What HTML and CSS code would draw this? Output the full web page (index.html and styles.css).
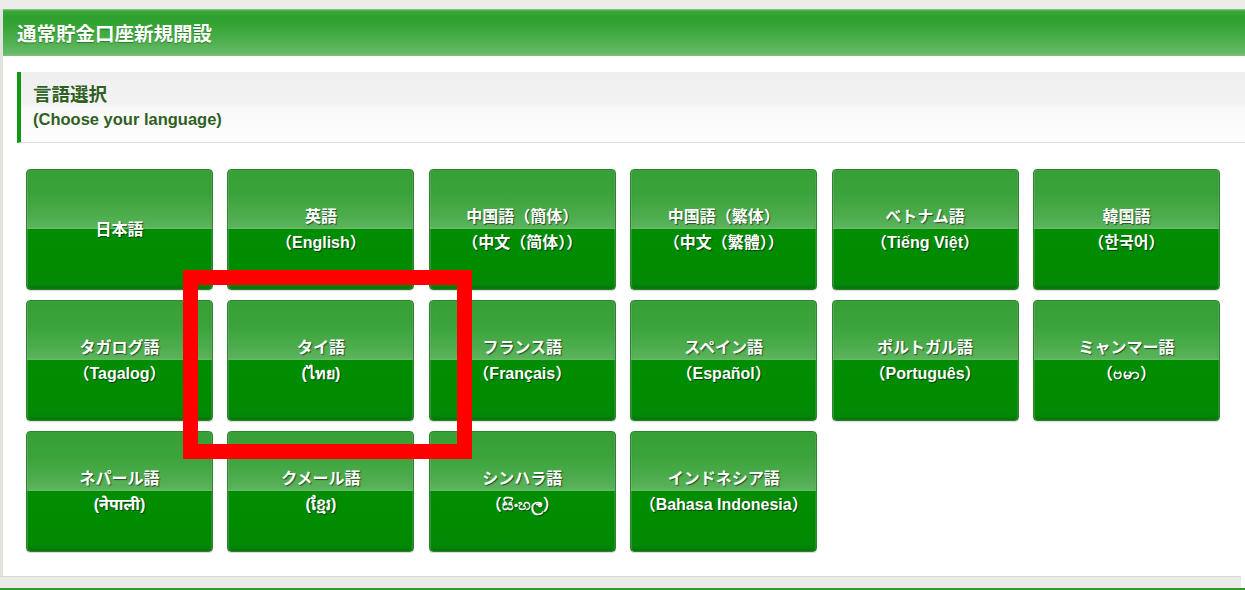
FILE: index.html
```html
<!DOCTYPE html>
<html lang="ja">
<head>
<meta charset="utf-8">
<title>通常貯金口座新規開設</title>
<link rel="stylesheet" href="styles.css">
</head>
<body>
<div class="page">
  <div class="topbar"></div>
  <div class="frame">
    <header class="title">通常貯金口座新規開設</header>
    <main class="panel">
      <div class="heading">
        <div class="heading-ja">言語選択</div>
        <div class="heading-en">(Choose your language)</div>
      </div>
      <div class="grid">
        <a class="lang"><span>日本語</span></a>
        <a class="lang"><span>英語</span><span>（English）</span></a>
        <a class="lang"><span>中国語（簡体）</span><span>（中文（简体））</span></a>
        <a class="lang"><span>中国語（繁体）</span><span>（中文（繁體））</span></a>
        <a class="lang"><span>ベトナム語</span><span>（Tiếng Việt）</span></a>
        <a class="lang"><span>韓国語</span><span>（한국어）</span></a>
        <a class="lang"><span>タガログ語</span><span>（Tagalog）</span></a>
        <a class="lang"><span>タイ語</span><span>(ไทย)</span></a>
        <a class="lang"><span>フランス語</span><span>（Français）</span></a>
        <a class="lang"><span>スペイン語</span><span>（Español）</span></a>
        <a class="lang"><span>ポルトガル語</span><span>（Português）</span></a>
        <a class="lang"><span>ミャンマー語</span><span>（ဗမာ）</span></a>
        <a class="lang"><span>ネパール語</span><span>(नेपाली)</span></a>
        <a class="lang"><span>クメール語</span><span>(ខ្មែរ)</span></a>
        <a class="lang"><span>シンハラ語</span><span>（සිංහල）</span></a>
        <a class="lang"><span>インドネシア語</span><span>（Bahasa Indonesia）</span></a>
      </div>
    </main>
  </div>
  <div class="footbar"></div>
  <div class="footline"></div>
  <div class="annotation"></div>
</div>
</body>
</html>
```
FILE: styles.css
```css
html, body {
  margin: 0;
  padding: 0;
  background: #ffffff;
}
body {
  font-family: "Liberation Sans", "Noto Sans CJK JP", "Noto Sans", sans-serif;
  overflow: hidden;
}
.page {
  position: relative;
  width: 1245px;
}
.topbar {
  height: 9px;
  background: #ecedea;
}
.frame {
  border-left: 3px solid #e2e4df;
}
.title {
  height: 47px;
  box-sizing: border-box;
  padding-left: 14px;
  display: flex;
  align-items: center;
  color: #ffffff;
  font-size: 19.5px;
  font-weight: bold;
  text-shadow: 0 1px 1px rgba(0, 60, 0, 0.45);
  background: linear-gradient(to bottom, #8fd08f 0px, #3aa63a 2px, #2ea12e 8px, #35a435 35%, #4fb04f 70%, #66bb66 94%, #7cc47c 100%);
}
.panel {
  display: block;
  padding: 16px 0 24px 14px;
  background: #ffffff;
}
.heading {
  height: 71px;
  box-sizing: border-box;
  border-left: 4px solid #119a11;
  border-bottom: 1px solid #dadada;
  padding: 11px 0 0 12px;
  background: linear-gradient(to bottom, #efefef 0%, #f2f2f2 45%, #f9f9f9 52%, #fdfdfd 100%);
  color: #2f5f23;
  font-weight: bold;
  text-shadow: 0 1px 0 #ffffff;
}
.heading-ja {
  font-size: 18.5px;
  line-height: 24px;
}
.heading-en {
  font-size: 16.5px;
  line-height: 24px;
}
.grid {
  margin: 26px 0 0 9px;
  display: grid;
  grid-template-columns: repeat(6, 187px);
  grid-auto-rows: 121px;
  column-gap: 14.4px;
  row-gap: 10px;
}
.lang {
  box-sizing: border-box;
  display: flex;
  flex-direction: column;
  align-items: center;
  justify-content: center;
  border: 1px solid #2c832c;
  border-radius: 4px;
  background: linear-gradient(to bottom, #36a036 0%, #3ba33b 20%, #4cac4c 38%, #5bb45b 48%, #6cbd6c 49.6%, #018d01 50%, #008c00 80%, #05870a 100%);
  box-shadow: inset 1px 0 1px rgba(255, 255, 255, 0.2), inset -1px 0 1px rgba(255, 255, 255, 0.15), inset 0 -2px 3px rgba(0, 50, 0, 0.25), 0 1px 1px rgba(0, 0, 0, 0.15);
  color: #ffffff;
  font-size: 16px;
  font-weight: bold;
  line-height: 26px;
  text-shadow: 1px 1px 1px rgba(0, 0, 0, 0.55);
  cursor: pointer;
}
.footbar {
  height: 11px;
  border-top: 1px solid #d8dbd5;
  background: #e9ebe6;
  margin-right: 4px;
}
.footline {
  height: 3px;
  background: #2e9a2e;
}
.annotation {
  position: absolute;
  left: 183px;
  top: 270px;
  width: 289px;
  height: 189px;
  box-sizing: border-box;
  border: 15px solid #ff0000;
  pointer-events: none;
}
```
